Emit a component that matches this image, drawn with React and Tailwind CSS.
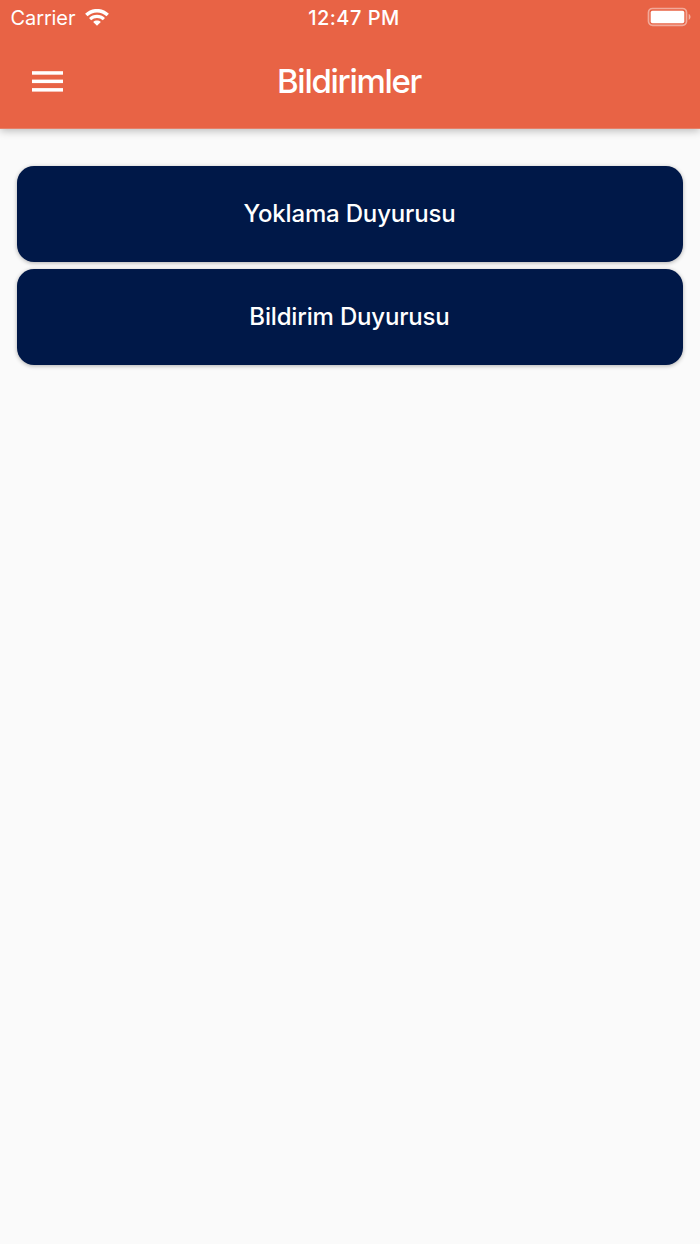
function WifiIcon() {
  return (
    <svg className="ml-[9.5px] h-[18px] w-[24px]" viewBox="0 0 24 18" fill="none" aria-hidden="true">
      <path d="M1.3 6C7.4.2 16.6.2 22.7 6" stroke="white" strokeWidth="3.5" />
      <path d="M5.1 10.1c3.9-3.7 9.9-3.7 13.8 0" stroke="white" strokeWidth="3.1" />
      <path d="M8.2 13c2.2-1.9 5.4-1.9 7.6 0L12 16.8z" fill="white" />
    </svg>
  );
}

function BatteryIcon() {
  return (
    <svg className="h-[20px] w-[46px]" viewBox="0 0 46 20" fill="none" aria-hidden="true">
      <rect x="2.5" y="1.5" width="38" height="16.8" rx="4" stroke="white" strokeOpacity=".45" strokeWidth="1.7" />
      <rect x="4.7" y="3.8" width="33.6" height="12.4" rx="1.8" fill="white" />
      <path d="M42.7 6.8c2.4 1.5 2.4 4.8 0 6.2z" fill="white" fillOpacity=".5" />
    </svg>
  );
}

function MenuIcon() {
  return (
    <svg className="h-[21px] w-[31px]" viewBox="0 0 31 21" fill="white" aria-hidden="true">
      <rect y="0.2" width="31" height="3.5" />
      <rect y="8.6" width="31" height="3.5" />
      <rect y="17.1" width="31" height="3.5" />
    </svg>
  );
}

function StatusBar() {
  return (
    <div className="grid h-[36px] grid-cols-3 items-center text-[20px] leading-[36px]">
      <div className="flex items-center pl-[10.5px]">
        <span className="tracking-[-0.1px]">Carrier</span>
        <WifiIcon />
      </div>
      <span className="pl-[8px] text-center font-medium tracking-[0.5px]">12:47 PM</span>
      <div className="flex justify-end pr-[8px] pb-[2px]">
        <BatteryIcon />
      </div>
    </div>
  );
}

function NoticeCard({ label }) {
  return (
    <button className="h-[96px] w-full rounded-[17px] bg-[#001848] pr-[1px] text-[24px] font-medium tracking-[-0.17px] text-white shadow-[0_1px_4px_rgba(0,0,0,0.3)]">
      {label}
    </button>
  );
}

export default function App() {
  return (
    <div className="min-h-[1244px] bg-[#fafafa] font-['Inter','Liberation_Sans',sans-serif]">
      <header className="h-[129px] border-b border-[#e58068] bg-[#e86345] text-white shadow-[0_2px_8px_rgba(0,0,0,0.25)]">
        <StatusBar />
        <div className="grid h-[92px] grid-cols-[100px_1fr_100px] items-center">
          <button className="ml-[32px] -mt-[1px] w-[31px]" aria-label="Menu">
            <MenuIcon />
          </button>
          <h1 className="pr-[2px] text-center text-[33px] font-medium tracking-[-1.3px]">Bildirimler</h1>
        </div>
      </header>
      <main className="flex flex-col gap-[7px] px-[17px] pt-[37px]">
        <NoticeCard label="Yoklama Duyurusu" />
        <NoticeCard label="Bildirim Duyurusu" />
      </main>
    </div>
  );
}
